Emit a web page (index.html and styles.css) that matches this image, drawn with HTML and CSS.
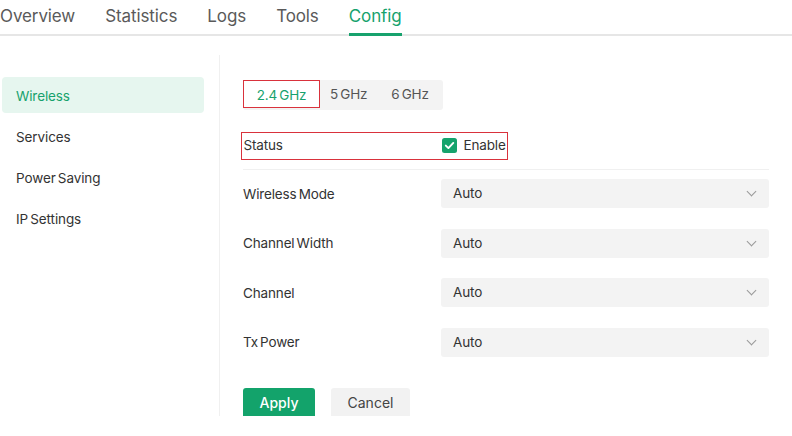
FILE: index.html
```html
<!DOCTYPE html>
<html lang="en">
<head>
  <meta charset="UTF-8" />
  <title>Config - Wireless</title>
  <link rel="stylesheet" href="styles.css">
</head>
<body>

  <!-- Top tabs -->
  <div class="tabs">
    <a href="#">Overview</a>
    <a href="#">Statistics</a>
    <a href="#">Logs</a>
    <a href="#">Tools</a>
    <a href="#" class="active">Config</a>
  </div>

  <div class="main">
    <!-- Sidebar -->
    <div class="sidebar">
      <a href="#" class="active">Wireless</a>
      <a href="#">Services</a>
      <a href="#">Power Saving</a>
      <a href="#">IP Settings</a>
    </div>

    <!-- Content -->
    <div class="content">
      <div class="bands">
        <span class="band selected">2.4 GHz</span>
        <span class="band">5 GHz</span>
        <span class="band">6 GHz</span>
      </div>

      <div class="status-wrap">
        <div class="status">
          <span class="label">Status</span>
          <span class="check">
            <svg width="15" height="15" viewBox="0 0 15 15">
              <rect width="15" height="15" rx="2.5" fill="#15a36c"/>
              <path d="M3.8 7.6 L6.4 10.1 L11.3 4.9" fill="none" stroke="#fff" stroke-width="1.9" stroke-linecap="round" stroke-linejoin="round"/>
            </svg>
            Enable
          </span>
        </div>
      </div>

      <div class="fields">
        <div class="row">
          <span class="label">Wireless Mode</span>
          <div class="select">Auto <span class="chev"></span></div>
        </div>
        <div class="row">
          <span class="label">Channel Width</span>
          <div class="select">Auto <span class="chev"></span></div>
        </div>
        <div class="row">
          <span class="label">Channel</span>
          <div class="select">Auto <span class="chev"></span></div>
        </div>
        <div class="row">
          <span class="label">Tx Power</span>
          <div class="select">Auto <span class="chev"></span></div>
        </div>
      </div>

      <div class="actions">
        <button class="btn apply">Apply</button>
        <button class="btn cancel">Cancel</button>
      </div>
    </div>
  </div>

</body>
</html>
```

FILE: styles.css
```css
body {
  margin: 0;
  font-family: Inter, "Noto Sans", sans-serif;
  color: #333;
  background: #fff;
}

/* TABS */
.tabs {
  display: flex;
  gap: 30px;
  height: 34px;
  border-bottom: 2px solid #e6e6e6;
}

.tabs a {
  font-size: 17px;
  line-height: 32px;
  color: #5a5a5a;
  text-decoration: none;
  margin-bottom: -2px;
  border-bottom: 3px solid transparent;
  letter-spacing: -0.1px;
}

.tabs a.active {
  color: #17a26d;
  border-bottom-color: #17a26d;
}

.main {
  display: flex;
  margin-top: 19px;
  height: 361px;
}

/* SIDEBAR */
.sidebar {
  width: 220px;
  box-sizing: border-box;
  padding: 22px 15px 0 2px;
  border-right: 1px solid #f0f0f0;
  display: flex;
  flex-direction: column;
  gap: 5px;
}

.sidebar a {
  height: 36px;
  line-height: 38px;
  padding-left: 14px;
  font-size: 13.5px;
  letter-spacing: -0.1px;
  word-spacing: -1.5px;
  color: #333;
  text-decoration: none;
  border-radius: 4px;
}

.sidebar a.active {
  background: #e6f6ef;
  color: #17a26d;
}

/* CONTENT */
.content {
  width: 526px;
  padding: 25px 0 0 23px;
  font-size: 13.5px;
  letter-spacing: -0.15px;
  word-spacing: -1.5px;
}

.bands {
  display: inline-flex;
  background: #f3f3f3;
  border-radius: 3px;
  height: 30px;
  align-items: flex-start;
  padding-right: 2px;
}

.band {
  height: 28px;
  line-height: 28px;
  padding: 0 12px;
  color: #555;
}

.band.selected {
  box-sizing: border-box;
  width: 77px;
  padding: 0;
  text-align: center;
  background: #fff;
  color: #17a26d;
  border: 1.5px solid #d9323c;
  margin-right: -2px;
}

.status-wrap {
  margin-top: 22px;
  padding-bottom: 9px;
  border-bottom: 1px solid #f0f0f0;
}

.status {
  display: flex;
  align-items: center;
  width: 267px;
  height: 28px;
  box-sizing: border-box;
  margin-left: -2px;
  padding: 0 0 3px 1.5px;
  border: 1.5px solid #d9323c;
}

.status .label {
  width: 198px;
}

.check {
  display: flex;
  align-items: center;
  gap: 7px;
}

.check svg {
  margin-top: 1px;
}

.fields {
  display: flex;
  flex-direction: column;
  gap: 20.5px;
  margin-top: 9px;
}

.row {
  display: flex;
  align-items: center;
  height: 29px;
}

.row .label {
  width: 198px;
}

.select {
  flex: 1;
  height: 29px;
  line-height: 29px;
  background: #f3f3f3;
  border-radius: 3px;
  padding-left: 12px;
  position: relative;
  color: #333;
}

.chev {
  position: absolute;
  right: 14px;
  top: 9px;
  width: 6px;
  height: 6px;
  border-right: 1.2px solid #999;
  border-bottom: 1.2px solid #999;
  transform: rotate(45deg);
}

.actions {
  display: flex;
  gap: 16px;
  margin-top: 31px;
}

.btn {
  height: 30px;
  border: none;
  border-radius: 3px;
  font-family: inherit;
  font-size: 14px;
  cursor: pointer;
}

.apply {
  width: 72px;
  background: #13a36b;
  color: #fff;
  font-weight: 500;
}

.cancel {
  width: 79px;
  background: #f2f2f2;
  color: #444;
}
```
